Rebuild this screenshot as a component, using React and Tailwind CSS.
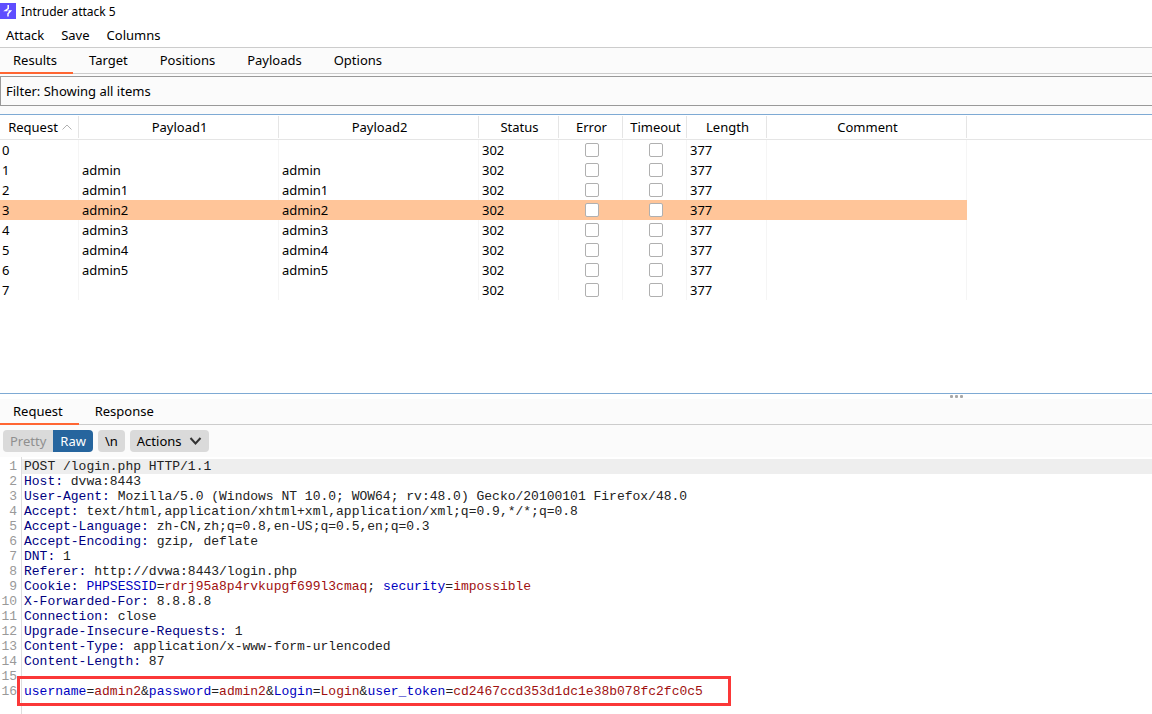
import React, { useState } from 'react';
import clsx from 'clsx';

const MENUS = ['Attack', 'Save', 'Columns'];
const TABS = ['Results', 'Target', 'Positions', 'Payloads', 'Options'];
const MESSAGE_TABS = ['Request', 'Response'];

const COLUMNS = [
  { name: 'Request', width: 'w-[79px]', sorted: true },
  { name: 'Payload1', width: 'w-[200px]' },
  { name: 'Payload2', width: 'w-[200px]' },
  { name: 'Status', width: 'w-[80px]' },
  { name: 'Error', width: 'w-[64px]' },
  { name: 'Timeout', width: 'w-[64px]' },
  { name: 'Length', width: 'w-[80px]' },
  { name: 'Comment', width: 'w-[200px]' },
];

const RESULTS = ['', 'admin', 'admin1', 'admin2', 'admin3', 'admin4', 'admin5', ''].map((payload, id) => ({
  id,
  payload,
  status: 302,
  error: false,
  timeout: false,
  length: 377,
}));

// each line is a list of [kind, text] tokens
const LINES = [
  [['text', 'POST /login.php HTTP/1.1']],
  [['header', 'Host:'], ['text', ' dvwa:8443']],
  [['header', 'User-Agent:'], ['text', ' Mozilla/5.0 (Windows NT 10.0; WOW64; rv:48.0) Gecko/20100101 Firefox/48.0']],
  [['header', 'Accept:'], ['text', ' text/html,application/xhtml+xml,application/xml;q=0.9,*/*;q=0.8']],
  [['header', 'Accept-Language:'], ['text', ' zh-CN,zh;q=0.8,en-US;q=0.5,en;q=0.3']],
  [['header', 'Accept-Encoding:'], ['text', ' gzip, deflate']],
  [['header', 'DNT:'], ['text', ' 1']],
  [['header', 'Referer:'], ['text', ' http://dvwa:8443/login.php']],
  [
    ['header', 'Cookie:'], ['text', ' '],
    ['name', 'PHPSESSID'], ['text', '='], ['value', 'rdrj95a8p4rvkupgf699l3cmaq'], ['text', '; '],
    ['name', 'security'], ['text', '='], ['value', 'impossible'],
  ],
  [['header', 'X-Forwarded-For:'], ['text', ' 8.8.8.8']],
  [['header', 'Connection:'], ['text', ' close']],
  [['header', 'Upgrade-Insecure-Requests:'], ['text', ' 1']],
  [['header', 'Content-Type:'], ['text', ' application/x-www-form-urlencoded']],
  [['header', 'Content-Length:'], ['text', ' 87']],
  [],
  [
    ['name', 'username'], ['text', '='], ['value', 'admin2'], ['text', '&'],
    ['name', 'password'], ['text', '='], ['value', 'admin2'], ['text', '&'],
    ['name', 'Login'], ['text', '='], ['value', 'Login'], ['text', '&'],
    ['name', 'user_token'], ['text', '='], ['value', 'cd2467ccd353d1dc1e38b078fc2fc0c5'],
  ],
];

const TOKEN_COLORS = {
  text: 'text-[#222222]',
  header: 'text-[#00007f]',
  name: 'text-[#0000bf]',
  value: 'text-[#a01010]',
};

function Tabs({ items, active, onSelect }) {
  return (
    <div role="tablist" className="flex h-[26px] shrink-0 border-b border-[#cccccc] bg-[#fbfbfb]">
      {items.map((item) => (
        <button
          key={item}
          type="button"
          role="tab"
          aria-selected={item === active}
          onClick={() => onSelect(item)}
          className={clsx(
            'h-[26px] border-b-2 px-4 pb-px first:pl-[13px]',
            item === active ? 'border-[#ff6633]' : 'border-transparent'
          )}
        >
          {item}
        </button>
      ))}
    </div>
  );
}

function ResultsTable({ selected, onSelect }) {
  return (
    <table className="w-full table-fixed border-separate border-spacing-0">
      <thead>
        <tr>
          {COLUMNS.map((col) => (
            <th key={col.name} className={clsx('h-[25px] border-b border-[#e5e5e5] p-0 font-normal', col.width)}>
              <span className="flex h-[22px] items-center justify-center gap-1 border-r border-[#e5e5e5] pl-0.5">
                {col.name}
                {col.sorted && (
                  <svg width="10" height="6" viewBox="0 0 10 6" fill="none" stroke="#b0b0b0">
                    <path d="M0.5 5.5 L5 1 L9.5 5.5" />
                  </svg>
                )}
              </span>
            </th>
          ))}
          <td className="border-b border-[#e5e5e5]"></td>
        </tr>
      </thead>
      <tbody>
        {RESULTS.map((row) => {
          const cell = clsx(
            'h-5 border-r p-0 pl-[3px] first:pl-0.5',
            row.id === selected ? 'border-[#ffc599] bg-[#ffc599]' : 'border-[#f5f5f5]'
          );
          return (
            <tr key={row.id} onClick={() => onSelect(row.id)}>
              <td className={cell}>{row.id}</td>
              <td className={cell}>{row.payload}</td>
              <td className={cell}>{row.payload}</td>
              <td className={cell}>{row.status}</td>
              <td className={cell}><Tick label={`Error ${row.id}`} checked={row.error} /></td>
              <td className={cell}><Tick label={`Timeout ${row.id}`} checked={row.timeout} /></td>
              <td className={cell}>{row.length}</td>
              <td className={cell}></td>
              <td></td>
            </tr>
          );
        })}
      </tbody>
    </table>
  );
}

function Tick({ label, checked }) {
  return (
    <input
      type="checkbox"
      aria-label={label}
      checked={checked}
      readOnly
      className="mx-auto block size-3.5 appearance-none rounded-xs border border-[#b0b0b0] bg-white checked:bg-[#26659e]"
    />
  );
}

function Editor() {
  return (
    <div className="flex flex-col bg-white font-['Liberation_Mono','Courier_New',monospace] text-[13px] leading-[15px]">
      <div className="ml-[21px] h-[2px] border-l border-[#dddddd]"></div>
      {LINES.map((tokens, i) => {
        const last = i === LINES.length - 1;
        return (
          <div key={i} className="flex h-[15px]">
            <span className="w-[21px] shrink-0 pr-1 text-right text-[#999999]">{i + 1}</span>
            <pre className={clsx('relative flex-1 border-l border-[#dddddd] pl-0.5 font-[inherit]', i === 0 && 'bg-[#eeeeee]')}>
              {tokens.map(([kind, text], n) => (
                <span key={n} className={TOKEN_COLORS[kind]}>{text}</span>
              ))}
              {last && (
                <span className="pointer-events-none absolute -top-2 -left-[5px] h-[30px] w-[714px] border-3 border-[#fb3838]"></span>
              )}
            </pre>
          </div>
        );
      })}
      <div className="ml-[21px] h-[15px] border-l border-[#dddddd]"></div>
    </div>
  );
}

export default function App() {
  const [tab, setTab] = useState('Results');
  const [messageTab, setMessageTab] = useState('Request');
  const [selected, setSelected] = useState(3);

  return (
    <div className="flex min-h-screen flex-col bg-white font-['Noto_Sans','Open_Sans',sans-serif] text-[13px] leading-5 text-black">
      <header className="flex h-[23px] items-center gap-[5px] text-xs">
        <svg width="16" height="16" viewBox="0 0 16 16" className="mb-px">
          <rect width="16" height="16" fill="#5f4dff" />
          <path d="M8.2 2 V5.5 L5.5 7.5 H7.5 M8.5 8 H10.5 L8 10.8 V13.5" fill="none" stroke="#ffffff" strokeWidth="1.5" />
        </svg>
        <h1>Intruder attack 5</h1>
      </header>

      <nav className="flex h-[25px] items-center gap-[17px] border-b border-[#cccccc] px-1.5">
        {MENUS.map((menu) => (
          <button key={menu} type="button">{menu}</button>
        ))}
      </nav>

      <Tabs items={TABS} active={tab} onSelect={setTab} />

      <div className="bg-[#fbfbfb] pt-0.5 pb-2">
        <button type="button" className="block h-[30px] w-full border border-r-0 border-[#999999] px-[5px] text-left">
          Filter: Showing all items
        </button>
      </div>

      <section className="flex-1 border-y border-[#7eaad4]">
        <ResultsTable selected={selected} onSelect={setSelected} />
      </section>

      {/* split pane handle */}
      <div className="flex h-[5px] items-center justify-center pl-[66%]">
        <svg width="13" height="3" viewBox="0 0 13 3" fill="#a8a8a8">
          <rect width="3" height="3" rx="1" />
          <rect x="5" width="3" height="3" rx="1" />
          <rect x="10" width="3" height="3" rx="1" />
        </svg>
      </div>

      <Tabs items={MESSAGE_TABS} active={messageTab} onSelect={setMessageTab} />

      <div className="flex h-8 items-center gap-[5px] bg-[#fbfbfb] px-[3px]">
        <div className="flex h-[22px] overflow-hidden rounded-sm">
          <button type="button" className="bg-[#dadada] px-[7px] text-[#8f8f8f]">Pretty</button>
          <button type="button" className="bg-[#26659e] px-[7px] text-white">Raw</button>
        </div>
        <button type="button" className="h-[22px] rounded-sm bg-[#dadada] px-[7px]">\n</button>
        <button type="button" className="flex h-[22px] items-center gap-[7px] rounded-sm bg-[#dadada] px-[7px]">
          Actions
          <svg width="13" height="8" viewBox="0 0 13 8" fill="none" stroke="#333333" strokeWidth="2">
            <path d="M1.5 1 L6.5 6.5 L11.5 1" />
          </svg>
        </button>
      </div>

      <Editor />
    </div>
  );
}
